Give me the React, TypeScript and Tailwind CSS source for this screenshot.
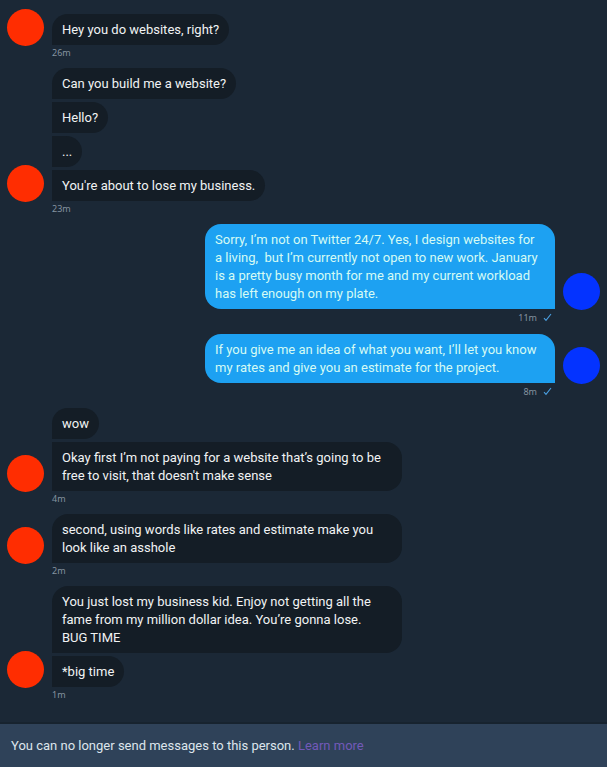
import clsx from "clsx";

type Thread = {
  from: "them" | "me";
  time: string;
  messages: string[];
};

const THREADS: Thread[] = [
  { from: "them", time: "26m", messages: ["Hey you do websites, right?"] },
  {
    from: "them",
    time: "23m",
    messages: ["Can you build me a website?", "Hello?", "...", "You're about to lose my business."],
  },
  {
    from: "me",
    time: "11m",
    messages: [
      "Sorry, I’m not on Twitter 24/7. Yes, I design websites for\na living,  but I’m currently not open to new work. January\nis a pretty busy month for me and my current workload\nhas left enough on my plate.",
    ],
  },
  {
    from: "me",
    time: "8m",
    messages: [
      "If you give me an idea of what you want, I’ll let you know\nmy rates and give you an estimate for the project.",
    ],
  },
  {
    from: "them",
    time: "4m",
    messages: [
      "wow",
      "Okay first I’m not paying for a website that’s going to be\nfree to visit, that doesn't make sense",
    ],
  },
  {
    from: "them",
    time: "2m",
    messages: ["second, using words like rates and estimate make you\nlook like an asshole"],
  },
  {
    from: "them",
    time: "1m",
    messages: [
      "You just lost my business kid. Enjoy not getting all the\nfame from my million dollar idea. You’re gonna lose.\nBUG TIME",
      "*big time",
    ],
  },
];

function SentCheck() {
  return (
    <svg width="9" height="9" viewBox="0 0 9 9" fill="none" aria-label="Sent">
      <path d="M1 5.2 3 7.4 8 1" stroke="#4a9fe0" strokeWidth="1.1" />
    </svg>
  );
}

function MessageGroup({ thread }: { thread: Thread }) {
  const mine = thread.from === "me";

  return (
    <li>
      <div className={clsx("flex items-end gap-2", mine && "flex-row-reverse")}>
        <div className={clsx("-mb-px size-[37px] shrink-0 rounded-full", mine ? "bg-[#0433ff]" : "bg-[#ff2d01]")} />
        <div className={clsx("flex flex-col gap-[3px]", mine ? "items-end" : "items-start")}>
          {thread.messages.map((text, i) => (
            <p
              key={text}
              className={clsx(
                "rounded-2xl px-[10px] pt-[7px] pb-[6px] whitespace-pre",
                text.includes("\n") && "w-[350px]",
                mine ? "rounded-br-none bg-[#1da1f2] text-[#d5fbf4]" : "rounded-bl-none bg-[#141d26] text-[#f1f3f4]",
                !mine && i > 0 && "rounded-tl-none"
              )}
            >
              {text}
            </p>
          ))}
        </div>
      </div>
      {/* timestamp */}
      <div
        className={clsx(
          "flex items-center font-['Noto_Sans',sans-serif] text-[9px] leading-4 text-[#8493a0]",
          mine ? "mr-[48px] h-[25px] justify-end gap-[6px] pb-2" : "ml-[45px] h-[23px] pb-[7px]"
        )}
      >
        <span>{thread.time}</span>
        {mine && <SentCheck />}
      </div>
    </li>
  );
}

export default function App() {
  return (
    <div className="flex min-h-screen flex-col bg-[#1b2836] font-['Roboto','Noto_Sans',sans-serif] text-[13px] leading-[18px]">
      <main className="flex-1 px-[7px] pt-[9px]">
        <ul>
          {THREADS.map((thread) => (
            <MessageGroup key={thread.time} thread={thread} />
          ))}
        </ul>
      </main>
      <footer className="border-t-2 border-[#17232f] bg-[#2f4259] px-[11px] pt-[13px] pb-3 text-[#dde5ec]">
        You can no longer send messages to this person.{" "}
        <a href="#" className="text-[#7259b8]">
          Learn more
        </a>
      </footer>
    </div>
  );
}
